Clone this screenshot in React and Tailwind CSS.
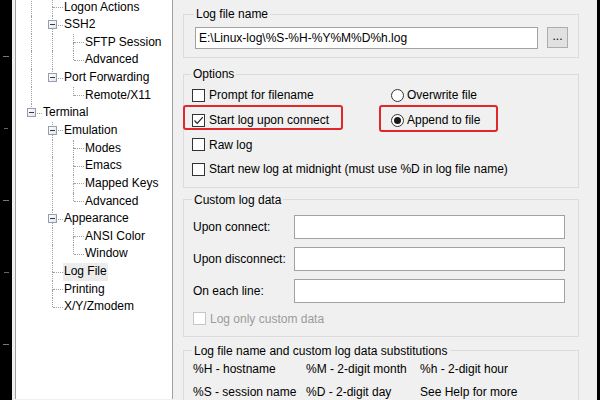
import React from 'react';

// x of a tree level's guide line, inside the tree panel
const lineX = (lvl) => 15 + lvl * 21;

// tree rows: level, label, box (expanded node), anc (ancestor levels whose line keeps going), next (has next sibling)
const treeRows = [
  { level: 1, label: 'Logon Actions', box: false, anc: [0], next: true },
  { level: 1, label: 'SSH2', box: true, anc: [0], next: true },
  { level: 2, label: 'SFTP Session', box: false, anc: [0, 1], next: true },
  { level: 2, label: 'Advanced', box: false, anc: [0, 1], next: false },
  { level: 1, label: 'Port Forwarding', box: true, anc: [0], next: false },
  { level: 2, label: 'Remote/X11', box: false, anc: [0], next: false },
  { level: 0, label: 'Terminal', box: true, anc: [], next: false },
  { level: 1, label: 'Emulation', box: true, anc: [], next: true },
  { level: 2, label: 'Modes', box: false, anc: [1], next: true },
  { level: 2, label: 'Emacs', box: false, anc: [1], next: true },
  { level: 2, label: 'Mapped Keys', box: false, anc: [1], next: true },
  { level: 2, label: 'Advanced', box: false, anc: [1], next: false },
  { level: 1, label: 'Appearance', box: true, anc: [], next: true },
  { level: 2, label: 'ANSI Color', box: false, anc: [1], next: true },
  { level: 2, label: 'Window', box: false, anc: [1], next: false },
  { level: 1, label: 'Log File', box: false, anc: [], next: true, selected: true },
  { level: 1, label: 'Printing', box: false, anc: [], next: true },
  { level: 1, label: 'X/Y/Zmodem', box: false, anc: [], next: false },
];

const TreeRow = ({ row }) => {
  const x = lineX(row.level);
  return (
    <div className="relative h-[17.65px]">
      {row.anc.map((a) => (
        <span
          key={a}
          className="absolute top-0 bottom-0 w-0 border-l border-dotted border-[#a0a0a0]"
          style={{ left: lineX(a) }}
        />
      ))}
      <span
        className="absolute top-0 h-1/2 w-0 border-l border-dotted border-[#a0a0a0]"
        style={{ left: x }}
      />
      {row.next && (
        <span
          className="absolute top-1/2 bottom-0 w-0 border-l border-dotted border-[#a0a0a0]"
          style={{ left: x }}
        />
      )}
      <span
        className="absolute top-[8.5px] h-0 w-[10px] border-t border-dotted border-[#a0a0a0]"
        style={{ left: x + 1 }}
      />
      {row.box && (
        <span
          className="absolute top-[4px] w-[9px] h-[9px] border border-[#919db4] bg-gradient-to-br from-white to-[#e4e4e4] flex items-center justify-center"
          style={{ left: x - 4 }}
        >
          <span className="block w-[5px] h-px bg-[#3a3a3a]" />
        </span>
      )}
      <span
        className={
          'absolute top-0 h-[17.65px] leading-[17.65px] px-px whitespace-nowrap ' +
          (row.selected ? 'bg-[#ececec]' : '')
        }
        style={{ left: x + 11 }}
      >
        {row.label}
      </span>
    </div>
  );
};

const Check = ({ checked, disabled }) => (
  <span
    className={
      'w-[13px] h-[13px] shrink-0 border bg-white flex items-center justify-center ' +
      (disabled ? 'border-[#c6c6c6]' : 'border-[#333333]')
    }
  >
    {checked && (
      <svg width="11" height="11" viewBox="0 0 11 11">
        <polyline points="1.5,5.5 4.2,8.3 9.8,2.2" fill="none" stroke="#222" strokeWidth="1.2" />
      </svg>
    )}
  </span>
);

const Radio = ({ checked }) => (
  <span className="w-[13px] h-[13px] shrink-0 rounded-full border border-[#333333] bg-white flex items-center justify-center">
    {checked && <span className="w-[7px] h-[7px] rounded-full bg-[#1a1a1a]" />}
  </span>
);

const Group = ({ title, className, children }) => (
  <fieldset className={'min-w-0 border border-[#dcdcdc] ' + className}>
    <legend className="ml-[-1px] px-[2px] leading-[14px]">{title}</legend>
    {children}
  </fieldset>
);

const TextBox = () => (
  <div className="w-[271px] h-[24px] border border-[#a2a2a2] bg-white" />
);

export default function App() {
  return (
    <div className="w-[600px] h-[400px] flex overflow-hidden bg-[#f0f0f0] text-[12px] text-black font-['Liberation_Sans',Arial,sans-serif]">
      {/* dark edge on the left */}
      <div className="w-[12px] h-full bg-black flex flex-col justify-around items-center py-[20px]">
        <span className="w-[6px] h-px bg-[#777]" />
        <span className="w-[4px] h-px bg-[#666]" />
        <span className="w-[6px] h-px bg-[#777]" />
        <span className="w-[5px] h-px bg-[#666]" />
        <span className="w-[6px] h-px bg-[#777]" />
      </div>
      <div className="pl-[3px] h-full">
        <div className="w-[158px] h-full bg-white border-x border-[#a0a0a0]">
          <div className="mt-[-1.5px]">
            {treeRows.map((r, i) => (
              <TreeRow key={i} row={r} />
            ))}
          </div>
        </div>
      </div>

      {/* settings pane */}
      <div className="w-[424px] h-full pl-[10px] pr-[18px] pt-[7px] flex flex-col">
        <Group title="Log file name" className="pl-[11px] pr-[10px] pt-[6px] pb-[8px]">
          <div className="flex items-start gap-[9px]">
            <div className="w-[343px] h-[22px] border border-[#a2a2a2] bg-white px-[3px] leading-[20px] whitespace-nowrap overflow-hidden">
              E:\Linux-log\%S-%H-%Y%M%D%h.log
            </div>
            <div className="w-[21px] h-[21px] border border-[#adadad] bg-[#e1e1e1] flex items-center justify-center leading-none pb-[3px]">
              ...
            </div>
          </div>
        </Group>

        <Group title="Options" className="mt-[9px] pl-[8px] pr-[10px] pt-[2px] pb-[5px]">
          <div className="grid grid-cols-[199px_1fr]">
            <div className="h-[24.7px] flex items-center gap-[4px]">
              <Check />
              <span>Prompt for filename</span>
            </div>
            <div className="h-[24.7px] flex items-center gap-[3px]">
              <Radio />
              <span>Overwrite file</span>
            </div>
            <div className="relative h-[24.7px] flex items-center gap-[4px]">
              <Check checked />
              <span>Start log upon connect</span>
              <span className="absolute top-[-3px] bottom-[2px] left-[-9px] w-[160px] border-[2.5px] border-[#e1262c] rounded-[3px]" />
            </div>
            <div className="relative h-[24.7px] flex items-center gap-[3px]">
              <Radio checked />
              <span>Append to file</span>
              <span className="absolute top-[-3px] bottom-[0px] left-[-12px] w-[119px] border-[2.5px] border-[#e1262c] rounded-[3px]" />
            </div>
            <div className="col-span-2 h-[24.7px] flex items-center gap-[4px]">
              <Check />
              <span>Raw log</span>
            </div>
            <div className="col-span-2 h-[24.7px] flex items-center gap-[4px]">
              <Check />
              <span>Start new log at midnight (must use %D in log file name)</span>
            </div>
          </div>
        </Group>

        <Group title="Custom log data" className="mt-[5px] pl-[9px] pr-[13px] pt-[8px] pb-[5px]">
          <div className="grid grid-cols-[101px_271px] gap-y-[8px] items-center">
            <span>Upon connect:</span>
            <TextBox />
            <span>Upon disconnect:</span>
            <TextBox />
            <span>On each line:</span>
            <TextBox />
          </div>
          <div className="mt-[4px] h-[24px] flex items-center gap-[4px] text-[#9b9b9b]">
            <Check disabled />
            <span>Log only custom data</span>
          </div>
        </Group>

        <Group title="Log file name and custom log data substitutions" className="mt-[7px] pl-[9px] pr-[10px] pt-0 pb-[4px]">
          <div className="grid grid-cols-[113px_114px_1fr]">
            <span className="h-[23px] leading-[23px]">%H - hostname</span>
            <span className="h-[23px] leading-[23px]">%M - 2-digit month</span>
            <span className="h-[23px] leading-[23px]">%h - 2-digit hour</span>
            <span className="h-[23px] leading-[23px]">%S - session name</span>
            <span className="h-[23px] leading-[23px]">%D - 2-digit day</span>
            <span className="h-[23px] leading-[23px]">See Help for more</span>
          </div>
        </Group>
      </div>
      <div className="w-[3px] h-full bg-black" />
    </div>
  );
}
